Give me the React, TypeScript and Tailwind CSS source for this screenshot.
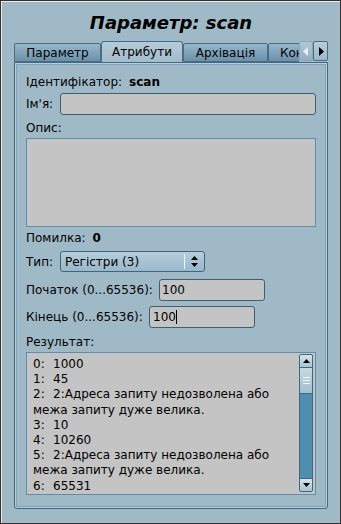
import React from "react";

const font = { fontFamily: '"DejaVu Sans", "Liberation Sans", sans-serif' };

function Tab({ label, active, w }: { label: string; active?: boolean; w: string }) {
  if (active) {
    return (
      <div
        className={`${w} h-[21px] shrink-0 flex items-center justify-center rounded-t-[3px] border border-b-0 border-[#4a6d85] bg-gradient-to-b from-[#b4cbd8] to-[#a3bccb] text-[12px] text-black`}
      >
        {label}
      </div>
    );
  }
  return (
    <div
      className={`${w} h-[19px] mt-[2px] shrink-0 flex items-center justify-center rounded-t-[2px] border border-[#4a6d85] bg-gradient-to-b from-[#98b7c9] to-[#6a91ab] text-[12px] text-black`}
    >
      {label}
    </div>
  );
}

function Field({ className }: { className: string }) {
  return <div className={`rounded-[3px] border border-[#3d5f76] bg-[#c4c4c4] ${className}`} />;
}

export default function App() {
  const lines: [string, string][] = [
    ["0:", "1000"],
    ["1:", "45"],
    ["2:", "2:Адреса запиту недозволена або"],
    ["", "межа запиту дуже велика."],
    ["3:", "10"],
    ["4:", "10260"],
    ["5:", "2:Адреса запиту недозволена або"],
    ["", "межа запиту дуже велика."],
    ["6:", "65531"],
  ];
  return (
    <div style={font} className="w-[341px] h-[524px] border border-[#3a2e28] bg-[#a0b9c7] text-black overflow-hidden">
      <div className="w-full h-full border-l border-t border-[#e4eef3] flex flex-col">
        <div className="h-[39px] pt-[3px] flex items-center justify-center">
          <span className="text-[18px] font-bold italic leading-none">Параметр: scan</span>
        </div>
        {/* tabs */}
        <div className="ml-[12px] w-[314px] h-[21px] flex">
          <div className="w-[285px] h-[21px] flex overflow-hidden">
            <Tab label="Параметр" w="w-[87px]" />
            <Tab label="Атрибути" active w="w-[82px]" />
            <Tab label="Архівація" w="w-[85px]" />
            <div className="w-[50px] h-[19px] mt-[2px] shrink-0 flex items-center pl-[11px] rounded-t-[2px] border border-[#4a6d85] bg-gradient-to-b from-[#98b7c9] to-[#6a91ab] text-[12px]">
              Конфігурація
            </div>
          </div>
          <div className="w-[14px] h-[20px] flex items-center justify-center border border-[#8aa6b8] rounded-[2px] bg-gradient-to-b from-[#b0c8d6] to-[#93b1c3]">
            <svg width="6" height="9" viewBox="0 0 6 9"><path d="M5 0 L0 4.5 L5 9 Z" fill="#e8eef2" /></svg>
          </div>
          <div className="w-[15px] h-[20px] flex items-center justify-center border border-[#4a6d85] rounded-[2px] bg-gradient-to-b from-[#b8cfdc] to-[#9ab7c8]">
            <svg width="6" height="9" viewBox="0 0 6 9"><path d="M1 0 L6 4.5 L1 9 Z" fill="#000" /></svg>
          </div>
        </div>
        {/* pane */}
        <div className="ml-[12px] w-[314px] h-[447px] border border-[#3f6882] rounded-b-[3px] shadow-[inset_0_0_0_1px_#b9ced9,inset_0_0_0_2px_#7fa3ba] px-[11px] pt-[11px] flex flex-col text-[12px]">
          <div className="h-[16px] flex items-center">
            <span>Ідентифікатор:</span>
            <span className="ml-[7px] font-bold">scan</span>
          </div>
          <div className="mt-[3px] h-[22px] flex items-center">
            <span className="w-[34px]">Ім'я:</span>
            <Field className="flex-1 h-[22px]" />
          </div>
          <div className="mt-[5px] h-[16px] flex items-center">Опис:</div>
          <div className="mt-[2px] h-[89px] border border-[#5d8eac] bg-[#c4c4c4]" />
          <div className="mt-[3px] h-[16px] flex items-center">
            <span>Помилка:</span>
            <span className="ml-[7px] font-bold">0</span>
          </div>
          <div className="mt-[5px] h-[21px] flex items-center">
            <span className="w-[34px]">Тип:</span>
            <div className="w-[145px] h-[21px] rounded-[3px] border border-[#3d6580] bg-gradient-to-b from-[#b6cedc] to-[#98b8cb] flex items-center">
              <span className="pl-[4px] flex-1">Регістри (3)</span>
              <div className="w-[1px] h-[15px] bg-[#eef4f7]" />
              <div className="w-[19px] flex items-center justify-center">
                <svg width="7" height="11" viewBox="0 0 7 11">
                  <path d="M3.5 0 L7 4 L0 4 Z" fill="#000" />
                  <path d="M0 7 L7 7 L3.5 11 Z" fill="#000" />
                </svg>
              </div>
            </div>
          </div>
          <div className="mt-[7px] h-[22px] flex items-center">
            <span className="w-[133px]">Початок (0...65536):</span>
            <div className="w-[106px] h-[22px] rounded-[3px] border border-[#3d5f76] bg-[#c4c4c4] flex items-center pl-[2px]">100</div>
          </div>
          <div className="mt-[5px] h-[22px] flex items-center">
            <span className="w-[123px]">Кінець (0...65536):</span>
            <div className="w-[106px] h-[22px] rounded-[3px] border border-[#3d5f76] bg-[#c4c4c4] flex items-center pl-[3px]">
              100<span className="w-[1px] h-[14px] bg-black" />
            </div>
          </div>
          <div className="mt-[6px] h-[16px] flex items-center">Результат:</div>
          <div className="mt-[2px] h-[143px] border border-[#5d8eac] bg-[#c4c4c4] flex pr-[2px] pt-[1px] pb-[2px]">
            <div className="flex-1 pl-[6px] pt-[3px] leading-[15.2px] text-[12px]">
              {lines.map(([a, b], i) => (
                <div key={i} className="flex whitespace-nowrap">
                  {a ? <span className="w-[20px]">{a}</span> : null}
                  <span>{b}</span>
                </div>
              ))}
            </div>
            <div className="w-[14px] h-full flex flex-col rounded-[2px] border border-[#3f6882] bg-[#4f8db1] overflow-hidden">
              <div className="h-[13px] flex items-center justify-center bg-gradient-to-b from-[#d6e4ec] to-[#a9c4d4] border-b border-[#3f6882]">
                <svg width="7" height="4" viewBox="0 0 7 4"><path d="M3.5 0 L7 4 L0 4 Z" fill="#000" /></svg>
              </div>
              <div className="h-[26px] flex flex-col items-center justify-center gap-[2px] bg-gradient-to-b from-[#c5d8e3] to-[#a3bfcf] border-b border-[#3f6882]">
                <div className="w-[7px] h-[1px] bg-[#f0f6f9]" />
                <div className="w-[7px] h-[1px] bg-[#f0f6f9]" />
                <div className="w-[7px] h-[1px] bg-[#f0f6f9]" />
              </div>
              <div className="flex-1" />
              <div className="h-[13px] flex items-center justify-center bg-gradient-to-b from-[#d6e4ec] to-[#a9c4d4] border-t border-[#3f6882]">
                <svg width="7" height="4" viewBox="0 0 7 4"><path d="M0 0 L7 0 L3.5 4 Z" fill="#000" /></svg>
              </div>
            </div>
          </div>
        </div>
      </div>
    </div>
  );
}
